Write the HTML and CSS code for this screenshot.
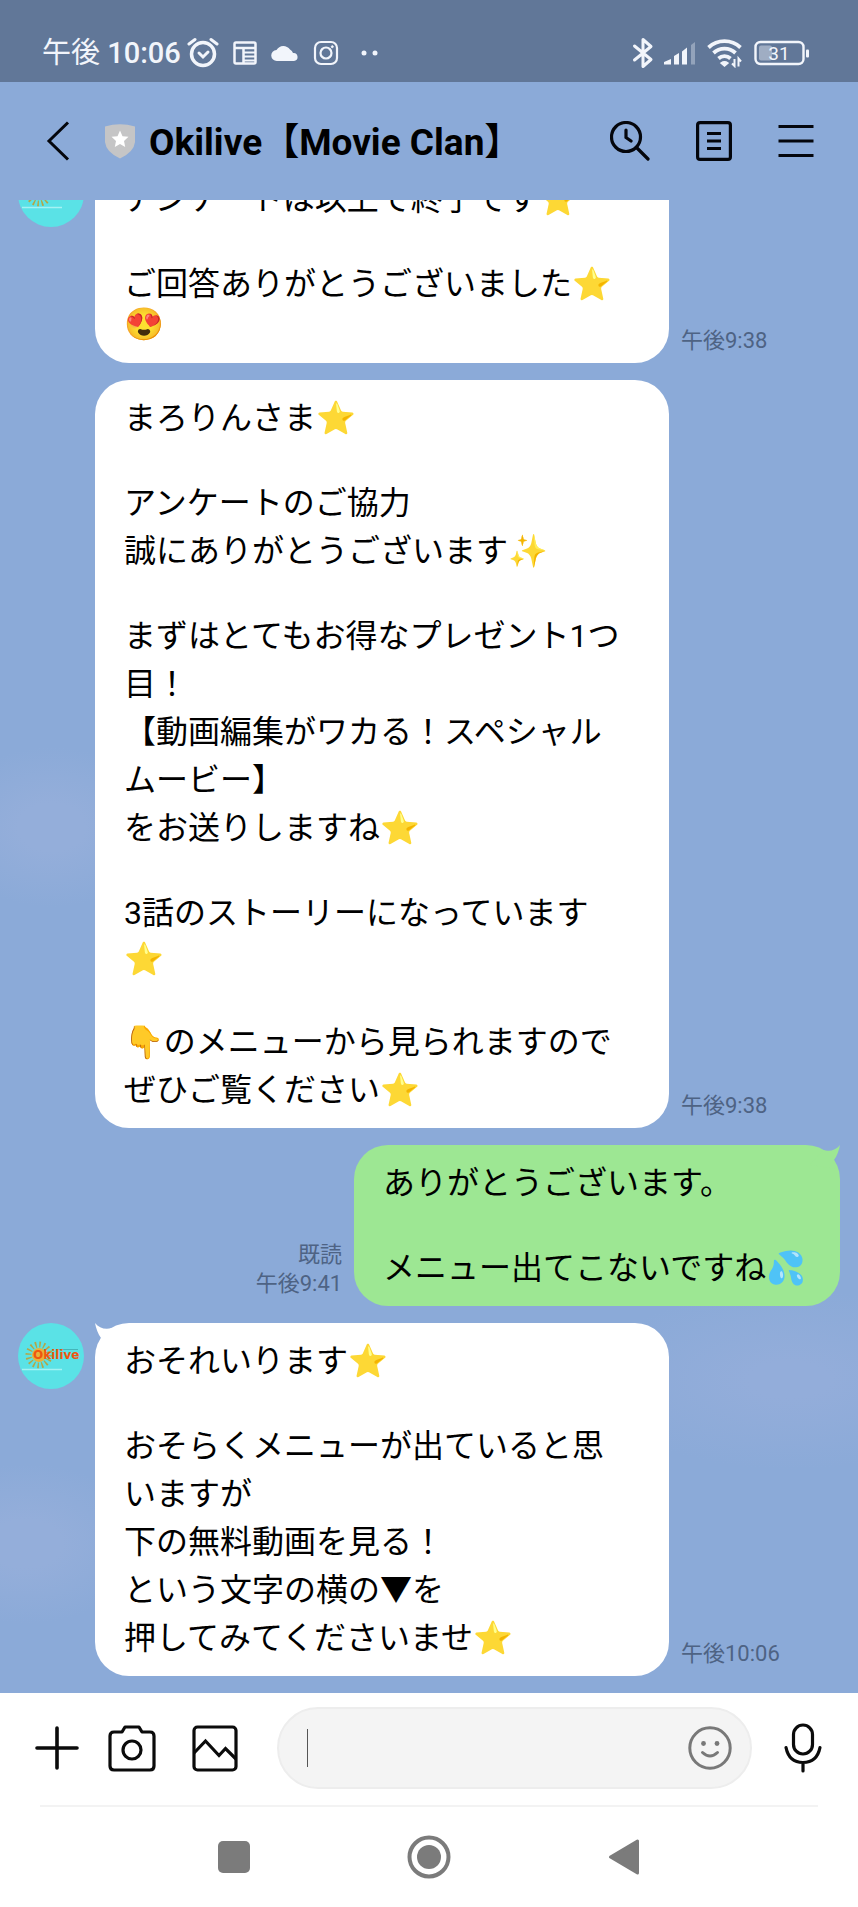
FILE: index.html
```html
<!DOCTYPE html>
<html lang="ja">
<head>
<meta charset="utf-8">
<meta name="viewport" content="width=device-width, initial-scale=1">
<title>Okilive【Movie Clan】</title>
<link rel="stylesheet" href="styles.css">
</head>
<body>
<svg class="defs" width="0" height="0" aria-hidden="true">
  <defs>
    <g id="avatar">
      <circle cx="33" cy="33" r="33" fill="#5ae2e6"/>
      <circle cx="21" cy="32" r="10.500" fill="none" stroke="#b5a645" stroke-width="6" stroke-dasharray="1.500 2.620"/>
      <circle cx="21" cy="32" r="7" fill="#e8b23a"/>
      <path d="M38 26.500H60" stroke="#45b5b8" stroke-width="1"/>
      <path d="M4 46.500H44" stroke="#a5f2f3" stroke-width="1.500"/>
      <text class="avatar-text" x="15" y="36">Okilive</text>
    </g>
  </defs>
</svg>
<div class="phone">
  <div class="status">
    <div class="status-left">
      <span class="clock">午後 <b>10:06</b></span>
      <svg class="alarm" width="32" height="32" viewBox="0 0 32 32" fill="none" stroke="#f2f5fb" stroke-width="3.500" stroke-linecap="round"><circle cx="16" cy="17" r="11.500"/><path d="M2 7L8 2.500M24 2.500L30 7" stroke-width="3"/><path d="M12 16l4 4 5-5" stroke-width="3"/></svg>
      <svg width="24" height="24" viewBox="0 0 24 24" fill="none" stroke="#f2f5fb" stroke-width="2.500"><rect x="1.500" y="1.500" width="21" height="21" rx="1.500"/><path d="M2 7H22M10.500 7V22" /><path d="M11 11.500H22M11 15.500H22M11 19.500H22" stroke-width="2"/></svg>
      <svg width="28" height="18" viewBox="0 0 28 18"><path d="M6 17a5.500 5.500 0 0 1-.5-11A8 8 0 0 1 19 5.500 6 6 0 0 1 22 9a4 4 0 0 1 1 8z" fill="#f2f5fb"/></svg>
      <svg width="26" height="26" viewBox="0 0 26 26" fill="none" stroke="#f2f5fb" stroke-width="2.200"><rect x="2" y="2" width="22" height="22" rx="6"/><circle cx="13" cy="13" r="5.500"/><circle cx="19.300" cy="6.700" r="1" fill="#f2f5fb" stroke-width="1"/></svg>
      <svg class="dots" width="18" height="8" viewBox="0 0 18 8" fill="#f2f5fb"><circle cx="3" cy="4" r="2.500"/><circle cx="14" cy="4" r="2.500"/></svg>
    </div>
    <div class="status-right">
      <svg width="22" height="32" viewBox="0 0 22 32" fill="none" stroke="#f2f5fb" stroke-width="3" stroke-linejoin="round" stroke-linecap="round"><path d="M2.500 9L19 22.500 11 29.500V2.500L19 9.500 2.500 23"/></svg>
      <svg width="32" height="24" viewBox="0 0 32 24" fill="#f2f5fb"><path d="M0 23.500V21l7-3v5.500zM10 23.500V15l5-3v11.500zM18 23.500V10.500l5-4v17z"/><path d="M27 23.500V4l4-3v22.500z" opacity=".35"/></svg>
      <svg width="38" height="30" viewBox="0 0 38 30" fill="none" stroke="#f2f5fb" stroke-width="3.800"><path d="M2.500 9.500a23.500 23.500 0 0 1 32 0M7.500 15a16 16 0 0 1 22 0M12.500 20.500a9 9 0 0 1 12 0"/><path d="M15 25q3.500-2.500 7 0l-3.500 3z" fill="#f2f5fb" stroke-width="1.500"/><path d="M28.500 21v7l-2.500-2.500M32.500 28.500v-8l2.500 3" stroke-width="2"/></svg>
      <svg width="56" height="26" viewBox="0 0 56 26"><rect x="1.500" y="2" width="48" height="22" rx="5" fill="none" stroke="#f2f5fb" stroke-width="2.400"/><rect x="5" y="5.500" width="13" height="15" rx="2" fill="#9fadc3"/><rect x="52" y="9.500" width="3" height="8" rx="1" fill="#f2f5fb"/><text class="battery" x="25" y="20">31</text></svg>
    </div>
  </div>

  <header class="header">
    <button class="icon-btn" aria-label="戻る"><svg width="24" height="40" viewBox="0 0 24 40" fill="none" stroke="#04060c" stroke-width="3"><path d="M22 1.500L3 20l19 18.500"/></svg></button>
    <svg class="shield" width="32" height="36" viewBox="0 0 32 36"><path d="M1 3.500Q16-1 31 3.500V19Q30 29 16 35.500 2 29 1 19z" fill="#c5c5c6"/><path d="M16 7.500l2.500 5.700 6 .6-4.500 4.100 1.200 6-5.200-3-5.200 3 1.200-6-4.500-4.100 6-.6z" fill="#fff"/></svg>
    <h1 class="title">Okilive【Movie Clan】</h1>
    <div class="actions">
      <button class="icon-btn" aria-label="検索"><svg width="40" height="40" viewBox="0 0 40 40" fill="none" stroke="#04060c" stroke-width="3.200" stroke-linecap="round"><circle cx="16" cy="16" r="14.500"/><path d="M26.500 26.500L38 38M16 9v7.500l5 3.500"/></svg></button>
      <button class="icon-btn" aria-label="ノート"><svg width="36" height="40" viewBox="0 0 36 40" fill="none" stroke="#04060c" stroke-width="3.200"><rect x="1.600" y="1.600" width="32.800" height="36.800" rx="2.500"/><path d="M11 12.500H25M11 20H25M11 27.500H25"/></svg></button>
      <button class="icon-btn" aria-label="メニュー"><svg width="36" height="40" viewBox="0 0 36 40" stroke="#04060c" stroke-width="3.200"><path d="M.5 5.500H35.500M.5 20H35.500M.5 34.500H35.500"/></svg></button>
    </div>
  </header>

  <main class="chat">
    <article class="msg">
      <svg class="avatar" width="66" height="66" viewBox="0 0 66 66" aria-hidden="true"><use href="#avatar"/></svg>
      <div class="bubble">
        <p>アンケートは以上で終了です⭐</p>
        <p class="blank"></p>
        <p>ご回答ありがとうございました⭐</p>
        <p class="emoji">😍</p>
      </div>
      <div class="meta"><time>午後9:38</time></div>
    </article>

    <article class="msg follow">
      <div class="bubble">
        <p>まろりんさま⭐</p>
        <p class="blank"></p>
        <p>アンケートのご協力</p>
        <p>誠にありがとうございます✨</p>
        <p class="blank"></p>
        <p>まずはとてもお得なプレゼント1つ目！</p>
        <p>【動画編集がワカる！スペシャル</p>
        <p>ムービー】</p>
        <p>をお送りしますね⭐</p>
        <p class="blank"></p>
        <p>3話のストーリーになっています</p>
        <p class="emoji">⭐</p>
        <p class="blank"></p>
        <p>👇のメニューから見られますので</p>
        <p>ぜひご覧ください⭐</p>
      </div>
      <div class="meta"><time>午後9:38</time></div>
    </article>

    <article class="msg own">
      <div class="meta"><span>既読</span><time>午後9:41</time></div>
      <div class="bubble">
        <svg class="tail" width="30" height="24" viewBox="0 0 30 24" aria-hidden="true"><path d="M30 0C26 5 20 7 13 5L0 20 27 24 24 15C27 11 29 5 30 0Z" fill="#9de793"/></svg>
        <p>ありがとうございます。</p>
        <p class="blank"></p>
        <p>メニュー出てこないですね💦</p>
      </div>
    </article>

    <article class="msg">
      <svg class="avatar" width="66" height="66" viewBox="0 0 66 66" role="img" aria-label="Okilive"><use href="#avatar"/></svg>
      <div class="bubble">
        <svg class="tail" width="30" height="24" viewBox="0 0 30 24" aria-hidden="true"><path d="M0 0C4 5 10 7 17 5L30 20 3 24 6 15C3 11 1 5 0 0Z" fill="#fff"/></svg>
        <p>おそれいります⭐</p>
        <p class="blank"></p>
        <p>おそらくメニューが出ていると思いますが</p>
        <p>下の無料動画を見る！</p>
        <p>という文字の横の▼を</p>
        <p>押してみてくださいませ⭐</p>
      </div>
      <div class="meta"><time>午後10:06</time></div>
    </article>
  </main>

  <form class="composer">
    <button type="button" class="icon-btn" aria-label="追加"><svg width="44" height="48" viewBox="0 0 44 48" stroke="#0b0b0b" stroke-width="3.600" stroke-linecap="round"><path d="M2 24H42M22 4V44"/></svg></button>
    <button type="button" class="icon-btn camera" aria-label="カメラ"><svg width="48" height="48" viewBox="0 0 48 48" fill="none" stroke="#0b0b0b" stroke-width="3.200" stroke-linejoin="round"><path d="M2 12Q2 8 6 8H14L17 3H31L34 8H42Q46 8 46 12V42Q46 46 42 46H6Q2 46 2 42Z"/><circle cx="24" cy="26" r="9"/></svg></button>
    <button type="button" class="icon-btn photo" aria-label="写真"><svg width="46" height="48" viewBox="0 0 46 48" fill="none" stroke="#0b0b0b" stroke-width="3.200"><rect x="2" y="3" width="42" height="43" rx="3.500"/><path d="M2 29L13.500 17 27 31.500 33.500 24.500 44 35"/></svg></button>
    <div class="field">
      <input class="input" type="text" aria-label="メッセージを入力">
      <span class="caret"></span>
      <button type="button" class="icon-btn" aria-label="スタンプ"><svg width="44" height="44" viewBox="0 0 44 44" fill="none" stroke="#787878" stroke-width="3" stroke-linecap="round"><circle cx="22" cy="22" r="20.200"/><path d="M14.500 26.500q7.500 7 15 0"/><circle cx="15.500" cy="17.500" r="2.400" fill="#787878" stroke="none"/><circle cx="29" cy="17.500" r="2.400" fill="#787878" stroke="none"/></svg></button>
    </div>
    <button type="button" class="icon-btn" aria-label="音声"><svg width="38" height="50" viewBox="0 0 38 50" fill="none" stroke="#0b0b0b" stroke-width="3.200" stroke-linecap="round"><rect x="9.500" y="2" width="19" height="29" rx="9.500"/><path d="M2 24.500Q5 39.500 19 39.500T36 24.500M19 40V48"/></svg></button>
  </form>

  <nav class="nav">
    <button class="icon-btn" aria-label="履歴"><svg width="44" height="44" viewBox="0 0 44 44"><rect x="6" y="6" width="32" height="32" rx="5" fill="#7b7b7b"/></svg></button>
    <button class="icon-btn" aria-label="ホーム"><svg width="44" height="44" viewBox="0 0 44 44"><circle cx="22" cy="22" r="19.500" fill="none" stroke="#7b7b7b" stroke-width="4"/><circle cx="22" cy="22" r="12" fill="#7b7b7b"/></svg></button>
    <button class="icon-btn" aria-label="戻る"><svg width="44" height="44" viewBox="0 0 44 44"><path d="M8.500 22L35.500 6V38Z" fill="#7b7b7b" stroke="#7b7b7b" stroke-width="3" stroke-linejoin="round"/></svg></button>
  </nav>
</div>
</body>
</html>
```

FILE: styles.css
```css
* { box-sizing: border-box; }

body {
  margin: 0;
  font-family: Roboto, "Noto Sans CJK JP", "Noto Color Emoji", sans-serif;
  color: #000;
  background: #fff;
}

.defs { position: absolute; }

svg { display: block; flex: none; }

.phone {
  display: flex;
  flex-direction: column;
  height: 100vh;
  overflow: hidden;
}

.icon-btn {
  flex: none;
  padding: 0;
  border: 0;
  background: none;
}

/* Status bar */
.status {
  flex: none;
  display: flex;
  justify-content: space-between;
  align-items: center;
  height: 82px;
  padding: 24px 48px 0 42px;
  background: #617798;
  color: #f2f5fb;
}

.status-left { display: flex; align-items: center; gap: 14px; }
.status-right { display: flex; align-items: center; gap: 10px; }
.clock { font-size: 29px; line-height: 36px; white-space: nowrap; }
.clock b { font-weight: 500; }
.alarm { margin-left: -8px; }
.dots { margin-left: 8px; }
.battery { font-size: 19px; font-family: Roboto, sans-serif; fill: #f2f5fb; text-anchor: middle; }

/* Header */
.header {
  flex: none;
  display: flex;
  align-items: center;
  height: 118px;
  padding: 0 44px 0 46px;
  background: #8baad8;
}

.shield { margin: 0 13px 0 34px; }

.title {
  flex: 1;
  margin: 0;
  padding-top: 4px;
  font-size: 37px;
  line-height: 48px;
  font-weight: 700;
  white-space: nowrap;
}

.actions { display: flex; gap: 46px; }

/* Conversation */
.chat {
  flex: 1;
  min-height: 0;
  display: flex;
  flex-direction: column;
  justify-content: flex-end;
  gap: 17px;
  padding: 0 18px 17px;
  overflow: hidden;
  background:
    radial-gradient(ellipse 110px 80px at 6% 42%, #94aeda 30%, transparent 100%),
    radial-gradient(ellipse 120px 80px at 3% 90%, #94aeda 30%, transparent 100%),
    radial-gradient(ellipse 200px 90px at 92% 79%, #93adda 20%, transparent 100%),
    #8baad8;
}

.msg { flex: none; display: flex; }
.avatar { margin-right: 11px; }
.avatar-text { font: 700 12px "DejaVu Sans", sans-serif; fill: #f0560f; }
.follow { padding-left: 77px; }
.own { justify-content: flex-end; }

.bubble {
  position: relative;
  flex: 0 1 574px;
  padding: 14px 34px 14px 29px;
  border-radius: 34px;
  background: #fff;
  font-size: 32px;
  line-height: 48px;
}

.own .bubble { flex: 0 1 auto; background: #9de793; }

.bubble p { margin: 0; min-height: 48px; }
.bubble .blank { min-height: 37px; }
.bubble .emoji { min-height: 44px; line-height: 44px; }
.bubble .emoji:last-child { min-height: 41px; line-height: 32px; }

.tail { position: absolute; top: 0; left: 0; }
.own .tail { left: auto; right: 0; }

.meta {
  display: flex;
  flex-direction: column;
  justify-content: flex-end;
  padding: 0 12px 8px;
  font-size: 22px;
  line-height: 29px;
  color: #4e6384;
  white-space: nowrap;
}

.own .meta { align-items: flex-end; }

/* Composer */
.composer {
  flex: none;
  display: flex;
  align-items: center;
  height: 112px;
  margin: 0;
  padding: 0 36px 2px 35px;
}

.camera { margin-left: 29px; }
.photo { margin: 0 39px 0 36px; }

.field {
  position: relative;
  flex: 1;
  min-width: 0;
  display: flex;
  align-items: center;
  height: 82px;
  margin-right: 32px;
  padding: 0 18px 0 30px;
  border: 2px solid #ededed;
  border-radius: 41px;
  background: #f4f4f4;
}

.input {
  flex: 1;
  min-width: 0;
  height: 48px;
  padding: 0;
  border: 0;
  outline: 0;
  background: none;
  font: inherit;
  font-size: 32px;
}

.caret { position: absolute; left: 28px; width: 1px; height: 38px; background: #555; }

/* System navigation */
.nav {
  flex: none;
  display: flex;
  justify-content: center;
  align-items: center;
  gap: 151px;
  height: 102px;
  margin: 0 40px;
  border-top: 2px solid #f3f3f3;
}
```
